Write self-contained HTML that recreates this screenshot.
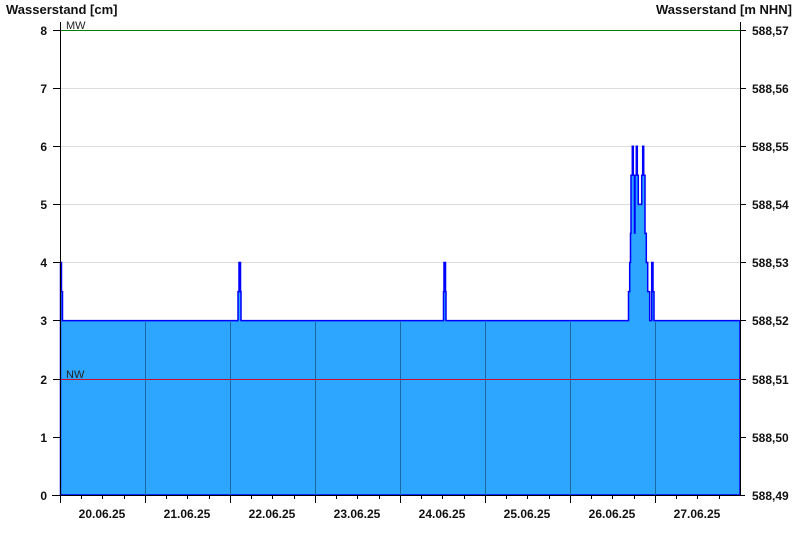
<!DOCTYPE html>
<html><head><meta charset="utf-8"><style>
html,body{margin:0;padding:0;background:#fff;}
svg{display:block;font-family:"Liberation Sans",Arial,sans-serif;}
</style></head><body>
<svg width="800" height="550" viewBox="0 0 800 550" xmlns="http://www.w3.org/2000/svg">
<rect width="800" height="550" fill="#fff"/>
<text x="6" y="14" font-size="13" font-weight="bold" fill="#111">Wasserstand [cm]</text>
<text x="792" y="14" font-size="13" font-weight="bold" fill="#111" text-anchor="end">Wasserstand [m NHN]</text>
<g stroke="#dcdcdc" stroke-width="1">
<line x1="61" y1="88.5" x2="740" y2="88.5"/>
<line x1="61" y1="146.5" x2="740" y2="146.5"/>
<line x1="61" y1="204.5" x2="740" y2="204.5"/>
<line x1="61" y1="262.5" x2="740" y2="262.5"/>
</g>
<line x1="61" y1="30.5" x2="740" y2="30.5" stroke="#008000" stroke-width="1"/>
<path d="M60.5,262.5 L61.5,262.5 L61.5,291.6 L62.5,291.6 L62.5,320.6 L238,320.6 L238,291.6 L239,291.6 L239,262.5 L240.5,262.5 L240.5,291.6 L241,291.6 L241,320.6 L443.5,320.6 L443.5,291.6 L444,291.6 L444,262.5 L445.5,262.5 L445.5,291.6 L446,291.6 L446,320.6 L628.5,320.6 L628.5,291.6 L629.7,291.6 L629.7,262.5 L630.5,262.5 L630.5,233.4 L631,233.4 L631,175.3 L632.3,175.3 L632.3,146.3 L633.3,146.3 L633.3,175.3 L634.5,175.3 L634.5,233 L635,233 L635,175.3 L636.3,175.3 L636.3,146.3 L637.3,146.3 L637.3,175.3 L638.3,175.3 L638.3,204.4 L641.7,204.4 L641.7,175.3 L642.7,175.3 L642.7,146.3 L643.7,146.3 L643.7,175.3 L645,175.3 L645,233.4 L646.3,233.4 L646.3,262.5 L647.7,262.5 L647.7,291.6 L649.7,291.6 L649.7,320.6 L651.7,320.6 L651.7,262.5 L653,262.5 L653,291.6 L654,291.6 L654,320.6 L740,320.6 L740,495 L60.5,495 Z" fill="#2ca6ff" stroke="#0000ff" stroke-width="1.5" stroke-linejoin="miter"/>
<g stroke="#1b68a8" stroke-width="1">
<line x1="145.5" y1="322" x2="145.5" y2="495"/>
<line x1="230.5" y1="322" x2="230.5" y2="495"/>
<line x1="315.5" y1="322" x2="315.5" y2="495"/>
<line x1="400.5" y1="322" x2="400.5" y2="495"/>
<line x1="485.5" y1="322" x2="485.5" y2="495"/>
<line x1="570.5" y1="322" x2="570.5" y2="495"/>
<line x1="655.5" y1="322" x2="655.5" y2="495"/>
</g>
<line x1="61" y1="379.5" x2="740" y2="379.5" stroke="#c8102e" stroke-width="1"/>
<text x="66" y="29" font-size="11" fill="#222">MW</text>
<text x="66" y="378" font-size="11" fill="#222">NW</text>
<g stroke="#000" stroke-width="1">
<line x1="60.5" y1="22" x2="60.5" y2="503"/>
<line x1="740.5" y1="22" x2="740.5" y2="495"/>
<line x1="52" y1="495.5" x2="745" y2="495.5"/>
<line x1="53" y1="30.5" x2="60" y2="30.5"/><line x1="53" y1="88.5" x2="60" y2="88.5"/><line x1="53" y1="146.5" x2="60" y2="146.5"/><line x1="53" y1="204.5" x2="60" y2="204.5"/><line x1="53" y1="262.5" x2="60" y2="262.5"/><line x1="53" y1="320.5" x2="60" y2="320.5"/><line x1="53" y1="379.5" x2="60" y2="379.5"/><line x1="53" y1="437.5" x2="60" y2="437.5"/>
<line x1="741" y1="30.5" x2="746" y2="30.5"/><line x1="741" y1="88.5" x2="746" y2="88.5"/><line x1="741" y1="146.5" x2="746" y2="146.5"/><line x1="741" y1="204.5" x2="746" y2="204.5"/><line x1="741" y1="262.5" x2="746" y2="262.5"/><line x1="741" y1="320.5" x2="746" y2="320.5"/><line x1="741" y1="379.5" x2="746" y2="379.5"/><line x1="741" y1="437.5" x2="746" y2="437.5"/>
<line x1="145.5" y1="495" x2="145.5" y2="503"/><line x1="230.5" y1="495" x2="230.5" y2="503"/><line x1="315.5" y1="495" x2="315.5" y2="503"/><line x1="400.5" y1="495" x2="400.5" y2="503"/><line x1="485.5" y1="495" x2="485.5" y2="503"/><line x1="570.5" y1="495" x2="570.5" y2="503"/><line x1="655.5" y1="495" x2="655.5" y2="503"/>
</g>
<g stroke="#000" stroke-width="1">
<path d="M81.5,495V499M102.5,495V499M124.5,495V499M166.5,495V499M187.5,495V499M209.5,495V499M251.5,495V499M272.5,495V499M294.5,495V499M336.5,495V499M357.5,495V499M379.5,495V499M421.5,495V499M442.5,495V499M464.5,495V499M506.5,495V499M527.5,495V499M549.5,495V499M591.5,495V499M612.5,495V499M634.5,495V499M676.5,495V499M697.5,495V499M719.5,495V499"/>
</g>
<g font-size="12" font-weight="bold" fill="#111" text-anchor="end">
<text x="47" y="35">8</text><text x="47" y="93">7</text><text x="47" y="151">6</text><text x="47" y="209">5</text><text x="47" y="267">4</text><text x="47" y="325">3</text><text x="47" y="384">2</text><text x="47" y="442">1</text><text x="47" y="500">0</text>
</g>
<g font-size="12" font-weight="bold" fill="#111">
<text x="752" y="35">588,57</text><text x="752" y="93">588,56</text><text x="752" y="151">588,55</text><text x="752" y="209">588,54</text><text x="752" y="267">588,53</text><text x="752" y="325">588,52</text><text x="752" y="384">588,51</text><text x="752" y="442">588,50</text><text x="752" y="500">588,49</text>
</g>
<g font-size="12" font-weight="bold" fill="#111" text-anchor="middle">
<text x="102" y="518">20.06.25</text><text x="187" y="518">21.06.25</text><text x="272" y="518">22.06.25</text><text x="357" y="518">23.06.25</text><text x="442" y="518">24.06.25</text><text x="527" y="518">25.06.25</text><text x="612" y="518">26.06.25</text><text x="697" y="518">27.06.25</text>
</g>
</svg>
</body></html>
